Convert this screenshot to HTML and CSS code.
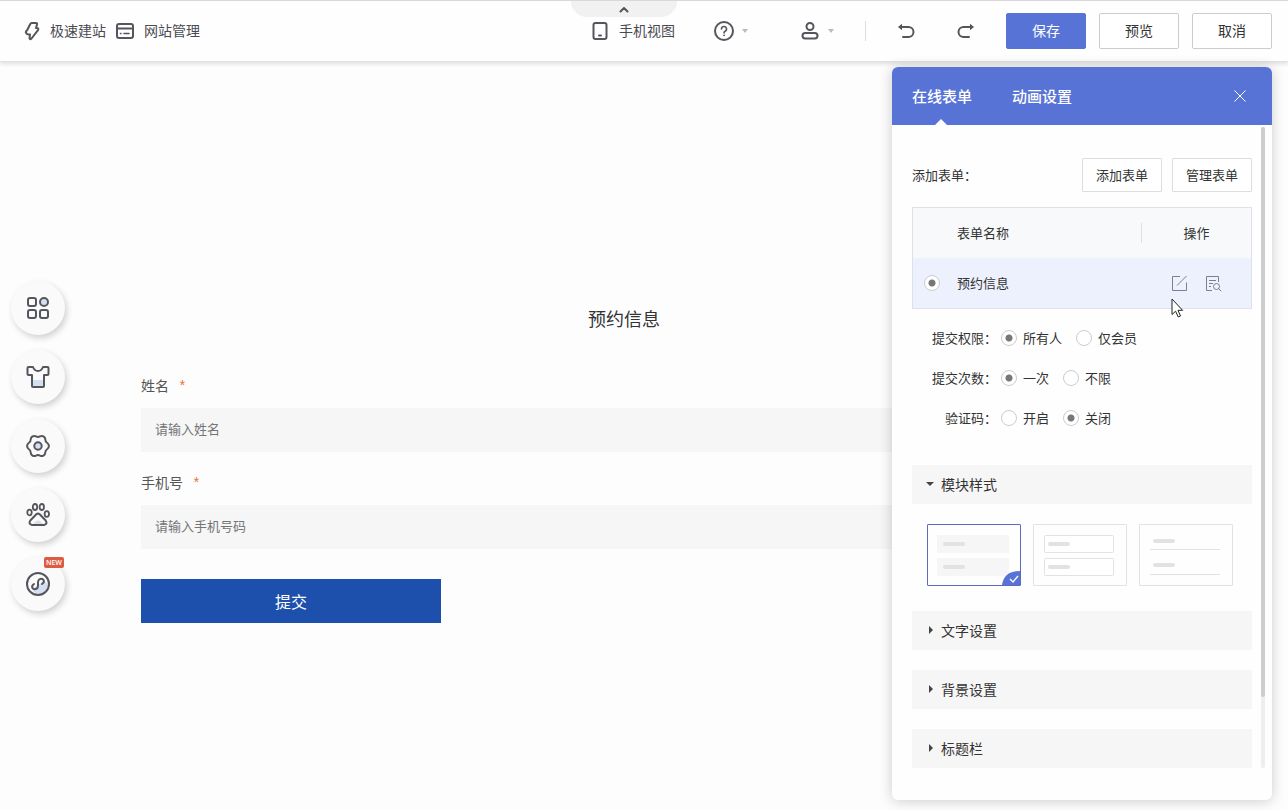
FILE: index.html
```html
<!DOCTYPE html>
<html lang="zh-CN">
<head>
<meta charset="utf-8">
<title>极速建站</title>
<meta name="viewport" content="width=device-width, initial-scale=1">
<link rel="stylesheet" href="styles.css">
</head>
<body>
<header class="topbar">
  <nav class="topbar-nav">
    <a class="nav-link" href="#">
      <svg class="icon" width="16" height="20" viewBox="0 0 16 20"><path d="M6 3.500Q6.500 2 8 2h4q1.500 0 1 1.500L12 7h1q2 .3 1 2.200L7.500 17.500Q6 19 5.500 17.300L6 13.500Q3 14 1.800 11.500 1.500 10 3 9.500z"/></svg>
      <span>极速建站</span>
    </a>
    <a class="nav-link" href="#">
      <svg class="icon" width="18" height="18" viewBox="0 0 18 18"><rect x="1" y="2" width="16" height="14" rx="2"/><path d="M1 6.500h16"/><path d="M4.500 11.500h.5M8 11.500h5" stroke-width="1.600"/></svg>
      <span>网站管理</span>
    </a>
  </nav>
  <button class="tray-toggle" type="button" aria-label="收起">
    <svg class="icon" width="10" height="7" viewBox="0 0 10 7"><path d="M1.500 5.500L5 2l3.500 3.500"/></svg>
  </button>
  <div class="topbar-tools">
    <button class="tool phone-view" type="button">
      <svg class="icon" width="16" height="20" viewBox="0 0 16 20"><rect x="1.500" y="2" width="13" height="16" rx="2"/><path d="M7 14.500h2"/></svg>
      <span>手机视图</span>
    </button>
    <button class="tool help" type="button" aria-label="帮助">
      <svg class="icon" width="20" height="20" viewBox="0 0 20 20"><circle cx="10" cy="10" r="9"/><path d="M7.500 8a2.500 2.500 0 1 1 3.600 2.200Q10 10.800 10 12" stroke-width="1.600"/><circle cx="10" cy="14.300" r=".5" stroke-width="1"/></svg>
      <span class="caret"></span>
    </button>
    <button class="tool account" type="button" aria-label="账号">
      <svg class="icon" width="18" height="20" viewBox="0 0 18 20"><circle cx="9" cy="5.500" r="3.500"/><rect x="1.500" y="12" width="15" height="5.500" rx="2.700"/></svg>
      <span class="caret"></span>
    </button>
    <span class="divider"></span>
    <button class="tool undo" type="button" aria-label="撤销">
      <svg class="icon" width="18" height="16" viewBox="0 0 18 16"><path d="M3 4h8.500a5 5 0 0 1 0 10H6"/><path d="M5 .8v6.400L1 4z" fill="#55565c" stroke="none"/></svg>
    </button>
    <button class="tool redo" type="button" aria-label="重做">
      <svg class="icon" width="18" height="16" viewBox="0 0 18 16"><path d="M15 4H6.500a5 5 0 0 0 0 10H12"/><path d="M13 .8v6.400L17 4z" fill="#55565c" stroke="none"/></svg>
    </button>
    <div class="actions">
      <button class="btn btn-primary" type="button">保存</button>
      <button class="btn" type="button">预览</button>
      <button class="btn" type="button">取消</button>
    </div>
  </div>
</header>

<main class="workspace">
  <aside class="rail">
    <button class="rail-btn" type="button" aria-label="组件">
      <svg class="icon" width="24" height="24" viewBox="0 0 24 24"><rect x="2" y="2" width="8" height="8" rx="2"/><circle class="tint" cx="18" cy="6" r="4"/><rect x="2" y="14" width="8" height="8" rx="2"/><rect x="14" y="14" width="8" height="8" rx="2"/></svg>
    </button>
    <button class="rail-btn" type="button" aria-label="模板">
      <svg class="icon" width="24" height="24" viewBox="0 0 24 24"><path class="tint-fill" d="M7 15h10v7H7z"/><path d="M2.500 2H7q1.500 4 5 4T17 2h4.500q1 0 1 1v6q0 1-1 1H18v11q0 1-1 1H7q-1 0-1-1V10H2.500q-1 0-1-1V3q0-1 1-1z"/></svg>
    </button>
    <button class="rail-btn" type="button" aria-label="设置">
      <svg class="icon" width="24" height="24" viewBox="0 0 24 24"><path d="M21.300 15A4 4 0 0 0 19.300 18.600 3.600 3.600 0 0 1 14 21.600 4 4 0 0 0 10 21.600 3.600 3.600 0 0 1 4.700 18.600 4 4 0 0 0 2.700 15 3.600 3.600 0 0 1 2.700 9 4 4 0 0 0 4.700 5.400 3.600 3.600 0 0 1 10 2.400 4 4 0 0 0 14 2.400 3.600 3.600 0 0 1 19.300 5.400 4 4 0 0 0 21.300 9 3.600 3.600 0 0 1 21.300 15z"/><circle class="tint" cx="12" cy="12" r="3.700"/></svg>
    </button>
    <button class="rail-btn" type="button" aria-label="营销">
      <svg class="icon" width="24" height="24" viewBox="0 0 24 24"><path class="tint-fill" d="M7 21.500q5-8 10 0z"/><g stroke-width="1.800"><ellipse cx="9" cy="4" rx="2.200" ry="3"/><ellipse cx="15.800" cy="4" rx="2.200" ry="3"/><ellipse cx="3.500" cy="9.500" rx="2.200" ry="2.800"/><ellipse cx="20.800" cy="11" rx="2.200" ry="2.800"/></g><path d="M10.300 11.300q1.700-1.300 3.400 0l6 6.200q2.300 3.700-1.700 4.500H6q-4-.8-1.700-4.500z"/></svg>
    </button>
    <button class="rail-btn" type="button" aria-label="小程序">
      <svg class="icon" width="26" height="26" viewBox="0 0 26 26"><path class="tint-fill" d="M7 18l12-8 4 3q-1 9-9 10-5 0-7-5z"/><circle cx="13" cy="13" r="11"/><path d="M9 13Q6.500 14.500 7.300 16.800 9 19.300 11.800 17.700 13 16.700 13 14.500V11.500Q13 9.300 14.400 8.300 17.200 6.700 18.700 9.200 19.500 11.500 17 13"/></svg>
      <span class="badge">NEW</span>
    </button>
  </aside>

  <form class="booking">
    <h1 class="booking-title">预约信息</h1>
    <label class="field-label" for="name">姓名 <span class="star">*</span></label>
    <input class="field" id="name" type="text" placeholder="请输入姓名">
    <label class="field-label" for="phone">手机号 <span class="star">*</span></label>
    <input class="field" id="phone" type="tel" placeholder="请输入手机号码">
    <button class="submit" type="button">提交</button>
  </form>

  <section class="panel">
    <div class="panel-head">
      <button class="tab tab-active" type="button">在线表单</button>
      <button class="tab" type="button">动画设置</button>
      <button class="close" type="button" aria-label="关闭面板">
        <svg width="12" height="12" viewBox="0 0 12 12"><path d="M.5 .5l11 11M11.500 .5l-11 11" stroke="#fff"/></svg>
      </button>
    </div>
    <div class="panel-body">
      <div class="add-row">
        <span class="add-label">添加表单：</span>
        <button class="small-btn" type="button">添加表单</button>
        <button class="small-btn" type="button">管理表单</button>
      </div>
      <table class="forms">
        <thead>
          <tr><th class="col-pick"></th><th class="col-name">表单名称</th><th class="col-ops"><span class="ops-title">操作</span></th></tr>
        </thead>
        <tbody>
          <tr>
            <td class="col-pick"><input class="radio" type="radio" id="form-1" name="form" checked></td>
            <td class="col-name"><label for="form-1">预约信息</label></td>
            <td class="col-ops">
              <div class="ops">
                <button class="op" type="button" aria-label="编辑"><svg class="thin" width="17" height="17" viewBox="0 0 17 17"><path d="M9 1.500H1.500v14h14V7.500M6 10.500l9.500-9.500"/></svg></button>
                <button class="op" type="button" aria-label="查看"><svg class="thin" width="17" height="17" viewBox="0 0 17 17"><path d="M7 15.500H1.500v-14h12V7M4 5.500h7M4 8.500h4M4 11.500h2"/><circle cx="11.500" cy="11.500" r="3"/><path d="M13.700 13.700l2.600 2.600"/></svg></button>
              </div>
            </td>
          </tr>
        </tbody>
      </table>
      <svg class="pointer" width="13" height="21" viewBox="0 0 13 21"><path d="M1 1v15.500l3.600-3.300 2.600 5.800 2.300-1L7 12.300h4.600z" fill="#fff" stroke="#222"/></svg>

      <div class="options">
        <div class="option-row" role="radiogroup" aria-label="提交权限">
          <span class="option-name">提交权限：</span>
          <label class="choice"><input class="radio" type="radio" name="who" checked>所有人</label>
          <label class="choice"><input class="radio" type="radio" name="who">仅会员</label>
        </div>
        <div class="option-row" role="radiogroup" aria-label="提交次数">
          <span class="option-name">提交次数：</span>
          <label class="choice"><input class="radio" type="radio" name="times" checked>一次</label>
          <label class="choice"><input class="radio" type="radio" name="times">不限</label>
        </div>
        <div class="option-row" role="radiogroup" aria-label="验证码">
          <span class="option-name">验证码：</span>
          <label class="choice"><input class="radio" type="radio" name="captcha">开启</label>
          <label class="choice"><input class="radio" type="radio" name="captcha" checked>关闭</label>
        </div>
      </div>

      <button class="section section-open" type="button">模块样式</button>
      <div class="styles">
        <button class="style-card style-selected" type="button" aria-label="填充样式">
          <svg width="92" height="60" viewBox="0 0 92 60"><path d="M9 10h72v18H9zM9 33h72v18H9z" fill="#f6f6f6"/><g fill="#e2e2e2"><rect x="15" y="17" width="22" height="4" rx="2"/><rect x="15" y="40" width="22" height="4" rx="2"/></g><path d="M74 60Q76 46 92 46V60z" fill="#5873d6"/><path d="M82 54l3 3 5-6" fill="none" stroke="#fff" stroke-width="1.400"/></svg>
        </button>
        <button class="style-card" type="button" aria-label="边框样式">
          <svg width="92" height="60" viewBox="0 0 92 60"><g fill="#fff" stroke="#e2e2e2"><rect x="10.500" y="10.500" width="69" height="17" rx="1"/><rect x="10.500" y="33.500" width="69" height="17" rx="1"/></g><g fill="#e2e2e2"><rect x="14" y="17" width="22" height="4" rx="2"/><rect x="14" y="40" width="22" height="4" rx="2"/></g></svg>
        </button>
        <button class="style-card" type="button" aria-label="下划线样式">
          <svg width="92" height="60" viewBox="0 0 92 60"><path d="M10 24.500h70M10 49.500h70" stroke="#e2e2e2"/><g fill="#e2e2e2"><rect x="13" y="14" width="22" height="4" rx="2"/><rect x="13" y="38" width="22" height="4" rx="2"/></g></svg>
        </button>
      </div>
      <button class="section" type="button">文字设置</button>
      <button class="section" type="button">背景设置</button>
      <button class="section" type="button">标题栏</button>
      <span class="scroll-track"><span class="scroll-thumb"></span></span>
    </div>
  </section>
</main>
</body>
</html>
```

FILE: styles.css
```css
* {
  box-sizing: border-box;
}

body {
  margin: 0;
  min-height: 100vh;
  display: flex;
  flex-direction: column;
  background: #fdfdfd;
  color: #333;
  font-family: "Noto Sans CJK SC", sans-serif;
  font-size: 13px;
  line-height: 20px;
}

button,
input {
  margin: 0;
  padding: 0;
  border: 0;
  background: none;
  color: inherit;
  font: inherit;
}

svg {
  display: block;
}

.icon {
  fill: none;
  stroke: #55565c;
  stroke-width: 2;
  stroke-linecap: round;
  stroke-linejoin: round;
}

/* Top bar */

.topbar {
  position: relative;
  display: flex;
  align-items: center;
  justify-content: space-between;
  height: 62px;
  padding: 0 16px 0 24px;
  border-top: 1px solid #d8d8d8;
  border-bottom: 1px solid #e2e2e2;
  background: #fefefe;
  box-shadow: 0 2px 4px rgba(0, 0, 0, 0.12);
  font-size: 14px;
}

.topbar-nav,
.topbar-tools,
.actions,
.nav-link,
.tool {
  display: flex;
  align-items: center;
}

.topbar-nav {
  gap: 10px;
}

.nav-link {
  gap: 10px;
  color: #4a4a52;
  text-decoration: none;
}

.nav-link span,
.phone-view span {
  padding-bottom: 2px;
}

.tray-toggle {
  position: absolute;
  top: 0;
  left: 50%;
  display: flex;
  align-items: center;
  justify-content: center;
  width: 106px;
  height: 16px;
  margin-left: -73px;
  border-radius: 0 0 16px 16px;
  background: #f1f1f2;
}

.phone-view {
  gap: 11px;
  margin-right: 39px;
  color: #4a4a52;
}

.help {
  gap: 8px;
  margin-right: 53px;
}

.account {
  gap: 9px;
  margin-right: 31px;
}

.tool .caret {
  padding: 0;
  border: 3px solid transparent;
  border-top: 4px solid #bbb;
  border-bottom: 0;
}

.divider {
  width: 1px;
  height: 20px;
  margin-right: 31px;
  background: #ddd;
}

.undo {
  margin-right: 42px;
}

.redo {
  margin-right: 31px;
}

.actions {
  gap: 13px;
}

.btn {
  width: 80px;
  height: 36px;
  padding-bottom: 2px;
  border: 1px solid #ccc;
  border-radius: 2px;
  background: #fff;
}

.btn-primary {
  border-color: #5873d6;
  background: #5873d6;
  color: #fff;
}

/* Workspace */

.workspace {
  position: relative;
  flex: 1;
  display: flex;
  align-items: flex-start;
}

.rail {
  display: flex;
  flex-direction: column;
  gap: 15px;
  padding: 219px 0 0 11px;
}

.rail-btn {
  position: relative;
  display: flex;
  align-items: center;
  justify-content: center;
  width: 54px;
  height: 54px;
  border-radius: 50%;
  background: #fafafa;
  box-shadow: 2px 3px 6px rgba(0, 0, 0, 0.18);
}

.tint {
  fill: #d5dff2;
}

.tint-fill {
  fill: #d5dff2;
  stroke: none;
}

.badge {
  position: absolute;
  top: 0;
  right: 1px;
  width: 20px;
  border-radius: 2px;
  background: #dd5b40;
  color: #fff;
  font: 600 7px/11px "Open Sans", sans-serif;
  text-align: center;
}

.booking {
  flex: 1;
  display: flex;
  flex-direction: column;
  padding: 241px 181px 40px 76px;
}

.booking-title {
  margin: 0 0 42px;
  font-size: 18px;
  font-weight: 400;
  line-height: 30px;
  text-align: center;
}

.field-label {
  margin-bottom: 13px;
  color: #555;
  font-size: 14px;
}

.star {
  margin-left: 6px;
  color: #e8722c;
  font-family: "Liberation Mono", monospace;
  line-height: 1;
}

.field {
  width: 100%;
  height: 44px;
  margin-bottom: 20px;
  padding: 0 14px 3px;
  background: #f6f6f7;
}

.field::placeholder {
  color: #757575;
  opacity: 1;
}

.submit {
  width: 300px;
  height: 44px;
  margin-top: 10px;
  padding-bottom: 1px;
  background: #1c50ac;
  color: #fff;
  font-size: 16px;
}

/* Settings panel */

.panel {
  position: absolute;
  top: 5px;
  right: 16px;
  width: 380px;
  padding-bottom: 32px;
  border-radius: 6px;
  background: #fefefe;
  box-shadow: 0 1px 14px rgba(0, 0, 0, 0.2);
}

.panel-head {
  display: flex;
  align-items: stretch;
  gap: 40px;
  height: 58px;
  padding: 0 26px 0 20px;
  border-radius: 6px 6px 0 0;
  background: #5873d6;
  color: #fff;
}

.tab {
  position: relative;
  font-size: 15px;
  font-weight: 500;
}

.tab-active::after {
  content: "";
  position: absolute;
  bottom: 0;
  left: 50%;
  margin-left: -7px;
  border: 6px solid transparent;
  border-top: 0;
  border-bottom-color: #fff;
}

.close {
  margin-left: auto;
}

.panel-body {
  position: relative;
  display: flex;
  flex-direction: column;
  padding: 33px 20px 0;
}

.add-row {
  display: flex;
  align-items: center;
  gap: 10px;
  margin-bottom: 15px;
}

.add-label {
  margin-right: auto;
}

.small-btn {
  width: 80px;
  height: 34px;
  border: 1px solid #ddd;
  border-radius: 1px;
  background: #fff;
}

.forms {
  width: 100%;
  border: 1px solid #dfe1e8;
  border-collapse: separate;
  border-spacing: 0;
  table-layout: fixed;
}

.forms th,
.forms td {
  height: 50px;
  padding: 0;
  font-weight: 400;
  text-align: left;
}

.forms th {
  background: #f8f9fb;
}

.forms td {
  background: #edf0fd;
}

.forms .col-pick {
  width: 44px;
  padding-left: 11px;
}

.forms .col-ops {
  width: 110px;
  text-align: center;
}

.ops-title {
  display: block;
  border-left: 1px solid #dfe1e8;
}

.ops {
  display: flex;
  justify-content: center;
  gap: 17px;
}

.thin {
  fill: none;
  stroke: #7b7f90;
}

.pointer {
  position: absolute;
  top: 173px;
  left: 279px;
}

.radio {
  appearance: none;
  flex: none;
  display: block;
  width: 16px;
  height: 16px;
  border: 1px solid #ccc;
  border-radius: 50%;
  background: #fff;
}

.radio:checked {
  background: radial-gradient(circle, #777 2px, #777 3px, #fff 4px);
}

.options {
  display: flex;
  flex-direction: column;
  gap: 20px;
  padding: 19px 0 37px 20px;
}

.option-row {
  display: flex;
  align-items: center;
  gap: 14px;
}

.option-name {
  width: 65px;
  margin-right: -10px;
  text-align: right;
}

.choice {
  display: flex;
  align-items: center;
  gap: 6px;
}

.section {
  display: flex;
  align-items: center;
  height: 39px;
  padding: 0 0 1px 17px;
  background: #f6f6f6;
  font-size: 14px;
}

.section + .section {
  margin-top: 20px;
}

.section::before {
  content: "";
  margin-right: 8px;
  border: 4px solid transparent;
  border-left-color: #444;
  border-right: 0;
}

.section-open {
  padding-left: 14px;
}

.section-open::before {
  margin-right: 7px;
  border: 4px solid transparent;
  border-top-color: #444;
  border-bottom: 0;
}

.styles {
  display: flex;
  gap: 12px;
  padding: 20px 15px 25px;
}

.style-card {
  width: 94px;
  height: 62px;
  border: 1px solid #e2e2e2;
  border-radius: 1px;
}

.style-selected {
  border-color: #5f69bd;
}

.scroll-track {
  position: absolute;
  top: 2px;
  right: 7px;
  bottom: 0;
  width: 4px;
  border-radius: 2px;
  background: #eee;
}

.scroll-thumb {
  display: block;
  height: 89%;
  border-radius: 2px;
  background: #cdcdcd;
}
```
